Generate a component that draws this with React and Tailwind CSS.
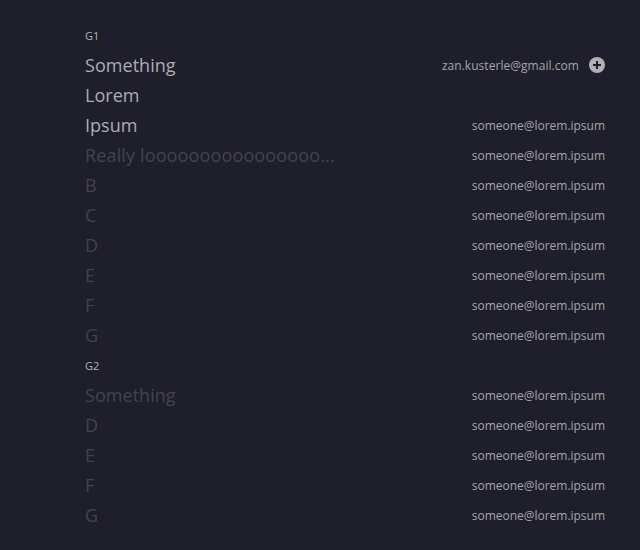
const E = "someone@lorem.ipsum";
const groups = [
  {
    title: "G1",
    rows: [
      { name: "Something", email: "zan.kusterle@gmail.com", active: true, add: true },
      { name: "Lorem", email: "", active: true },
      { name: "Ipsum", email: E, active: true },
      { name: "Really loooooooooooooooo...", email: E, long: true },
      { name: "B", email: E },
      { name: "C", email: E },
      { name: "D", email: E },
      { name: "E", email: E },
      { name: "F", email: E },
      { name: "G", email: E },
    ],
  },
  {
    title: "G2",
    rows: [
      { name: "Something", email: E },
      { name: "D", email: E },
      { name: "E", email: E },
      { name: "F", email: E },
      { name: "G", email: E },
    ],
  },
];

function AddIcon() {
  return (
    <svg className="ml-2.5 size-4" viewBox="0 0 16 16">
      <circle cx="8" cy="8" r="8" fill="#b1b1b5" />
      <path d="M8 4v8M4 8h8" stroke="#1f1f2b" strokeWidth="2" />
    </svg>
  );
}

function Row({ name, email, active, add, long }) {
  return (
    <li className="flex h-[30px] items-center justify-between">
      <span className={`whitespace-nowrap text-[18px] leading-[30px] ${long ? "tracking-[0.14px]" : "tracking-[0.04px]"} ${active ? "text-[#acacb2]" : "text-[#43434d]"}`}>{name}</span>
      <span className="flex items-center text-[12px] text-[#a5a5aa]">
        <span className={`pt-0.5 leading-[28px] ${add ? "tracking-[0.04px]" : "tracking-[-0.02px]"}`}>{email}</span>
        {add && <AddIcon />}
      </span>
    </li>
  );
}

export default function App() {
  return (
    <main className="flex h-[550px] w-[640px] flex-col overflow-hidden bg-[#1f1f2b] pt-5 pr-[35px] pl-[85px] font-['Open_Sans',sans-serif]">
      {groups.map((g) => (
        <section key={g.title}>
          <h2 className="h-[30px] text-[11px] leading-[32px] text-[#b4b4b8]">{g.title}</h2>
          <ul>
            {g.rows.map((r, i) => (
              <Row key={i} {...r} />
            ))}
          </ul>
        </section>
      ))}
    </main>
  );
}
